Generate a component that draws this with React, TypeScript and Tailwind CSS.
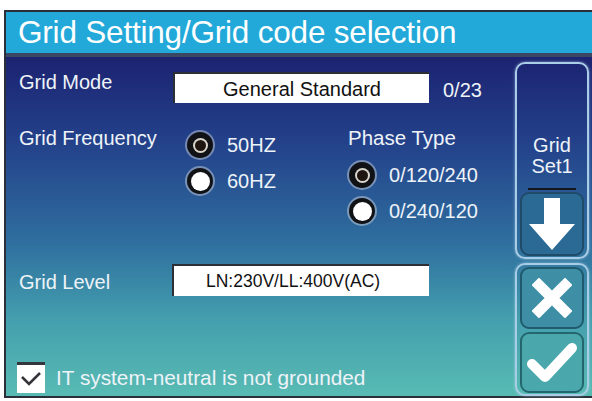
import React from "react";

const Radio: React.FC<{ on?: boolean; label: string }> = ({ on, label }) => (
  <div className="flex items-center h-[36px]">
    <div className="w-[26px] h-[26px] rounded-full bg-[#101216] flex items-center justify-center shadow-[0_0_0_2px_rgba(220,225,230,0.45)]">
      {on ? (
        <div className="w-[15px] h-[15px] rounded-full bg-[#d9d4cc] flex items-center justify-center">
          <div className="w-[11px] h-[11px] rounded-full bg-[#1e1410]" />
        </div>
      ) : (
        <div className="w-[19px] h-[19px] rounded-full bg-white" />
      )}
    </div>
    <span className="ml-[14px] text-[20px] text-[#eef3f8]">{label}</span>
  </div>
);

const App: React.FC = () => {
  return (
    <div className="w-[592px] h-[401px] bg-white pt-[10px] pl-[4px] pb-[3px] font-['Liberation_Sans',Arial,sans-serif]">
      <div className="h-full flex flex-col border-2 border-r-0 border-[#2b2f3a]">
        {/* title bar */}
        <div className="h-[45px] shrink-0 bg-[#22a9d9] border-b-4 border-[#3b4763] pl-[12px] text-white text-[31.5px] leading-[41px] tracking-[-0.2px]">
          Grid Setting/Grid code selection
        </div>

        <div className="flex-1 flex bg-[linear-gradient(180deg,#1c2371_0%,#23418a_25%,#2f6f9f_55%,#44a0ae_78%,#58bbb3_100%)]">
          {/* left side */}
          <div className="flex-1 flex flex-col pl-[13px] text-[#eef3f8] text-[20px]">
            {/* Grid Mode */}
            <div className="flex mt-[15px] h-[31px]">
              <div className="w-[154px] leading-[20px]">Grid Mode</div>
              <div className="w-[256px] h-[31px] bg-white border-t-2 border-l-2 border-[#2d2f36] text-[#111] text-[20px] flex items-center justify-center">
                General Standard
              </div>
              <div className="ml-[14px] mt-[7px] leading-[22px]">0/23</div>
            </div>

            {/* Frequency / Phase */}
            <div className="flex mt-[24px]">
              <div className="w-[168px] leading-[22px]">Grid Frequency</div>
              <div className="w-[161px]">
                <Radio on label="50HZ" />
                <Radio label="60HZ" />
              </div>
              <div className="flex flex-col">
                <div className="leading-[22px] text-[20.5px]">Phase Type</div>
                <div className="mt-[8px] ml-[1px]">
                  <Radio on label="0/120/240" />
                  <Radio label="0/240/120" />
                </div>
              </div>
            </div>

            {/* Grid Level */}
            <div className="flex items-center mt-[35px] h-[32px]">
              <div className="w-[153px] mt-[3px]">Grid Level</div>
              <div className="w-[257px] h-[32px] bg-white border-t-2 border-l-2 border-[#2d2f36] text-[#111] text-[17.5px] flex items-center pl-[32px]">
                LN:230V/LL:400V(AC)
              </div>
            </div>

            {/* IT system */}
            <div className="flex items-center mt-auto mb-[3px]">
              <div className="w-[28px] h-[31px] bg-white border-t-[3px] border-[#33363c] flex items-center justify-center -ml-[2px]">
                <svg width="22" height="16" viewBox="0 0 22 16">
                  <path d="M2 6 L9 13 L20 2" fill="none" stroke="#34343a" strokeWidth="2.6" />
                </svg>
              </div>
              <span className="ml-[11px] text-[20.8px]">IT system-neutral is not grounded</span>
            </div>
          </div>

          {/* right side */}
          <div className="w-[77px] shrink-0 flex flex-col pt-[5px] pr-[3px]">
            <div className="h-[197px] rounded-[10px] border-2 border-[#a9cde6] shadow-[0_0_3px_rgba(200,230,250,0.6)] flex flex-col justify-end px-[3px] pb-[1px]">
              <div className="text-center text-[#eef3f8] text-[20px] leading-[21px]">
                Grid
                <br />
                Set1
              </div>
              <div className="mx-[8px] mt-[11px] h-[2px] bg-[#15171c]" />
              <div className="mt-[2px] h-[64px] rounded-[9px] border-2 border-[#1f4a68] bg-[#2b6a95] flex items-center justify-center">
                <svg width="50" height="56" viewBox="0 0 50 56">
                  <path d="M17 2 H33 V28 H48 L25 54 L2 28 H17 Z" fill="white" />
                </svg>
              </div>
            </div>
            <div className="flex-1 mt-[4px] rounded-[10px] border-2 border-[#a9cde6] shadow-[0_0_3px_rgba(200,230,250,0.6)] flex flex-col gap-[3px] px-[3px] pt-[2px] pb-[1px]">
              <div className="flex-1 rounded-[9px] border-2 border-[#1f5a6e] bg-[#3e8fa6] flex items-center justify-center">
                <svg width="40" height="40" viewBox="0 0 40 40">
                  <path d="M7 7 L33 33 M33 7 L7 33" stroke="white" strokeWidth="10.5" strokeLinecap="square" />
                </svg>
              </div>
              <div className="flex-1 rounded-[9px] border-2 border-[#24666f] bg-[#4aa8ad] flex items-center justify-center">
                <svg width="52" height="44" viewBox="0 0 52 44">
                  <path d="M6 24 L19 37 L46 8" fill="none" stroke="white" strokeWidth="10" strokeLinecap="round" strokeLinejoin="round" />
                </svg>
              </div>
            </div>
          </div>
        </div>
      </div>
    </div>
  );
};

export default App;
